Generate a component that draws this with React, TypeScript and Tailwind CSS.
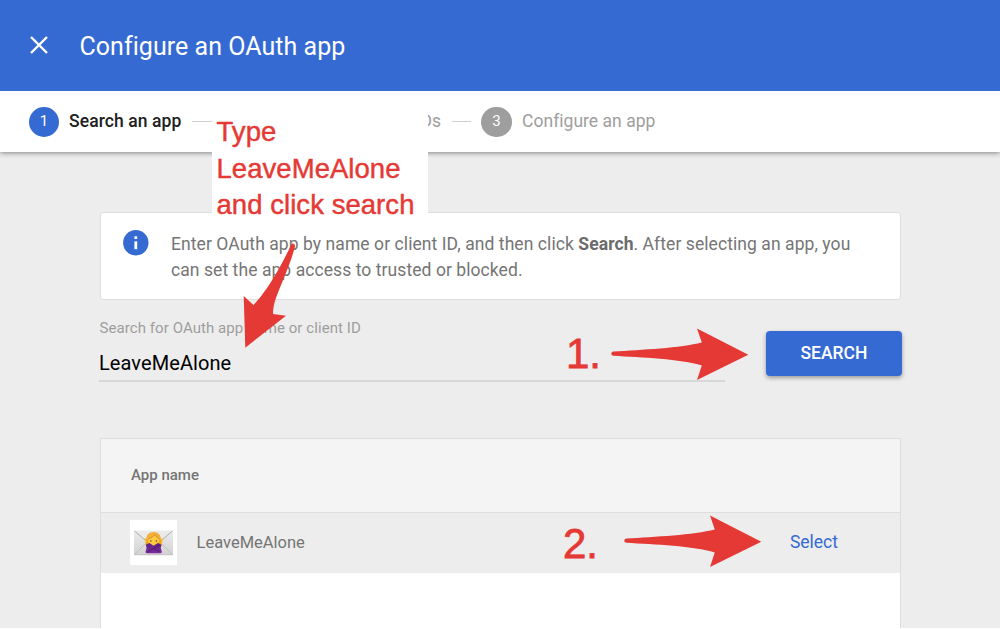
import React from "react";

const ARROW =
  "M2.5 23.6 C30 22 70 20 90.8 14.6 L86 0.6 L137.3 26.7 L86 52.1 L90.8 37.5 C70 31 30 29.5 2.5 27.8 C-0.4 27.4 -0.4 24 2.5 23.6 Z";

function Arrow({ className }: { className: string }) {
  return (
    <svg viewBox="0 0 138 53" width="138" height="53" className={className} aria-hidden="true">
      <path d={ARROW} fill="#e53935" />
    </svg>
  );
}

function InfoIcon() {
  return (
    <svg viewBox="0 0 26 26" className="h-[26px] w-[26px] shrink-0" aria-hidden="true">
      <circle cx="12.8" cy="12.8" r="12.7" fill="#366ad3" />
      <rect x="11.4" y="6.3" width="2.8" height="2.7" fill="#fff" />
      <rect x="11.4" y="11.4" width="2.8" height="7.8" fill="#fff" />
    </svg>
  );
}

function AppLogo() {
  return (
    <svg viewBox="0 0 47 45" className="h-[45px] w-[47px] shrink-0" aria-hidden="true">
      <defs>
        <linearGradient id="paper" x1="0" y1="0" x2="0" y2="1">
          <stop offset="0" stopColor="#ececec" />
          <stop offset="1" stopColor="#d2d2d2" />
        </linearGradient>
        <linearGradient id="shirt" x1="0" y1="0" x2="0" y2="1">
          <stop offset="0" stopColor="#5d2380" />
          <stop offset="1" stopColor="#7c2c9c" />
        </linearGradient>
      </defs>
      <rect width="47" height="45" fill="#fff" />
      <rect x="4" y="10.5" width="39" height="24.5" rx="1" fill="url(#paper)" />
      <path d="M4.5 34.5 L18 21 M42.5 34.5 L29 21" stroke="#bcbcbc" strokeWidth="0.8" />
      <path d="M4.5 11 L21 25 Q23.5 27 26 25 L42.5 11" fill="#eaeaea" stroke="#a6a6a6" strokeWidth="0.9" />
      <path d="M4.5 34.8 H42.5" stroke="#bdbdbd" strokeWidth="0.7" />
      <path d="M14.6 18.3 L17.5 19 L20 27 L16 26 Z M33 18.3 L30 19 L27.5 27 L31.5 26 Z" fill="#f8bd2a" />
      <path d="M16.4 21 C16 15.5 18.5 12.3 23.5 12.3 C28.5 12.3 31.3 15.5 30.8 21 L31.5 26 H15.7 Z" fill="#eba428" />
      <ellipse cx="23.6" cy="20.2" rx="5.6" ry="5.3" fill="#ffcb42" />
      <path d="M16.8 20 C20 19.5 23 17.6 25 15 C26 17.4 28 19.4 30.6 20 C30.6 14.6 27.6 12 23.4 12.2 C19.5 12.4 16.6 15 16.8 20Z" fill="#f5b23a" />
      <path d="M18.5 18.8 Q22.5 17.5 25 14.3 Q26.5 17.5 29.5 18.8" fill="none" stroke="#cf8423" strokeWidth="0.7" />
      <circle cx="20.9" cy="21" r="0.8" fill="#63411c" />
      <circle cx="26.3" cy="21" r="0.8" fill="#63411c" />
      <path d="M15.8 24.8 L19.5 23 L23.5 25.8 L27.8 23 L31.5 24.8 L30.7 28 L31.9 32 Q31.6 33.3 30 33.3 H17.2 Q15.6 33.3 15.5 32 L16.6 28 Z" fill="url(#shirt)" />
      <path d="M17.5 31.8 L29.5 25.2 M24 29 L29.5 31.8" stroke="#4b1769" strokeWidth="0.8" />
    </svg>
  );
}

function StepNumber({ n, active = false }: { n: number; active?: boolean }) {
  return (
    <span
      className={
        "flex h-[30px] shrink-0 items-center justify-center rounded-full text-[15px] text-white " +
        (active ? "w-[30px] bg-[#366ad3]" : "w-[31px] bg-[#9e9e9e]")
      }
    >
      {n}
    </span>
  );
}

export default function App() {
  return (
    <div className="relative flex h-[629px] w-[1000px] flex-col overflow-hidden bg-[#ededed] font-['Roboto',sans-serif]">
      <header className="z-20 flex h-[91px] shrink-0 items-center bg-[#366ad3] pl-[30px] text-white">
        <svg viewBox="0 0 18 18" className="mb-px h-[18px] w-[18px]" fill="none" stroke="currentColor" strokeWidth="2.4" aria-hidden="true">
          <path d="M1 1 L17 17 M17 1 L1 17" />
        </svg>
        <h1 className="mt-[3px] ml-[31.5px] text-[25px] leading-[30px] tracking-[0.04px] whitespace-nowrap">Configure an OAuth app</h1>
      </header>

      <nav className="z-10 flex h-[61px] shrink-0 items-center bg-white pl-[29px] text-[17.5px] whitespace-nowrap shadow-[0_1px_5px_rgba(0,0,0,0.45)]">
        <StepNumber n={1} active />
        <span className="mb-px ml-[10px] w-[123px] font-medium tracking-[0.08px] text-[#212121]">Search an app</span>
        <span className="h-px w-[20px] bg-[#cfcfcf]" />
        <span className="mb-px w-[229px] text-right text-[#9e9e9e]">IDs</span>
        <span className="ml-[11px] h-px w-[19px] bg-[#cfcfcf]" />
        <span className="ml-[10px] flex">
          <StepNumber n={3} />
        </span>
        <span className="mb-px ml-[10px] tracking-[0.03px] text-[#9e9e9e]">Configure an app</span>
      </nav>

      <main className="ml-[100px] flex w-[802px] grow flex-col pt-[60px]">
        <section className="mr-px flex h-[88px] shrink-0 items-start rounded-[3px] border border-[#dedede] bg-white pt-[17px] pl-[22px]">
          <InfoIcon />
          <p className="mt-[1px] ml-[22px] text-[17.5px] leading-[26px] tracking-[0.07px] whitespace-nowrap text-[#757575]">
            Enter OAuth app by name or client ID, and then click <b className="font-bold text-[#6b6b6b]">Search</b>. After selecting an app, you
            <br />
            can set the app access to trusted or blocked.
          </p>
        </section>

        <section className="-ml-px flex h-[138px] shrink-0">
          <div className="mt-[18px] flex h-[64px] w-[626px] flex-col border-b-2 border-[#d7d7d7]">
            <label className="pl-[0.5px] text-[15px] leading-[20px] tracking-[0.07px] text-[#9e9e9e]">Search for OAuth app name or client ID</label>
            <span className="mt-[13px] text-[20px] leading-[24px] tracking-[0.08px] text-black">LeaveMeAlone</span>
          </div>
          <button className="mt-[31px] ml-[41px] h-[45px] w-[136px] shrink-0 rounded-[4px] bg-[#366ad3] text-[17.5px] font-medium text-white shadow-[0_2px_4px_rgba(0,0,0,0.35)]">
            SEARCH
          </button>
        </section>

        <section className="mr-px flex h-[190px] shrink-0 flex-col border-x border-t border-[#dedede] bg-white">
          <div className="flex h-[74px] shrink-0 items-center border-b border-[#dedede] bg-[#f4f4f4] pb-px pl-[30px] text-[15px] font-medium text-[#757575]">
            App name
          </div>
          <div className="flex h-[60px] shrink-0 items-start bg-[#ededed] pt-[7px] pl-[29px]">
            <AppLogo />
            <span className="ml-[19.5px] text-[16.5px] leading-[45px] text-[#757575]">LeaveMeAlone</span>
            <a className="mr-[62px] ml-auto text-[17.5px] leading-[45px] text-[#366ad3]">Select</a>
          </div>
        </section>
      </main>
      <div className="absolute bottom-0 left-0 h-px w-full bg-white" />

      <div className="absolute top-[105px] left-[212px] z-20 h-[117px] w-[216px] bg-white pt-[9px] pl-[4.5px] font-['Liberation_Sans',sans-serif] text-[27.5px] leading-[36.5px] tracking-[0.05px] whitespace-nowrap text-[#e53935] [-webkit-text-stroke:0.45px_#e53935]">
        Type
        <br />
        LeaveMeAlone
        <br />
        and click search
      </div>
      <svg viewBox="0 0 50 112" className="absolute top-[240px] left-[240px] z-20 h-[112px] w-[50px] overflow-visible" aria-hidden="true">
        <path
          d="M55 6.5 C55 3.5 52.3 2.5 51 5 C45 18 37 33 29 45 C23 54 17.5 61 13.4 65 L3.7 56 L5.3 107.7 L46 75.7 L33 74 C33 63 37.5 54 43.5 39 C48 28 52 18 55 6.5 Z"
          fill="#e53935"
        />
      </svg>
      <span className="absolute top-[330px] left-[566px] z-20 font-['Liberation_Sans',sans-serif] text-[42px] leading-[48px] text-[#e53935] [-webkit-text-stroke:0.8px_#e53935]">1.</span>
      <Arrow className="absolute top-[328px] left-[611px] z-20" />
      <span className="absolute top-[520px] left-[563px] z-20 font-['Liberation_Sans',sans-serif] text-[42px] leading-[48px] text-[#e53935] [-webkit-text-stroke:0.8px_#e53935]">2.</span>
      <Arrow className="absolute top-[515px] left-[624px] z-20" />
    </div>
  );
}
